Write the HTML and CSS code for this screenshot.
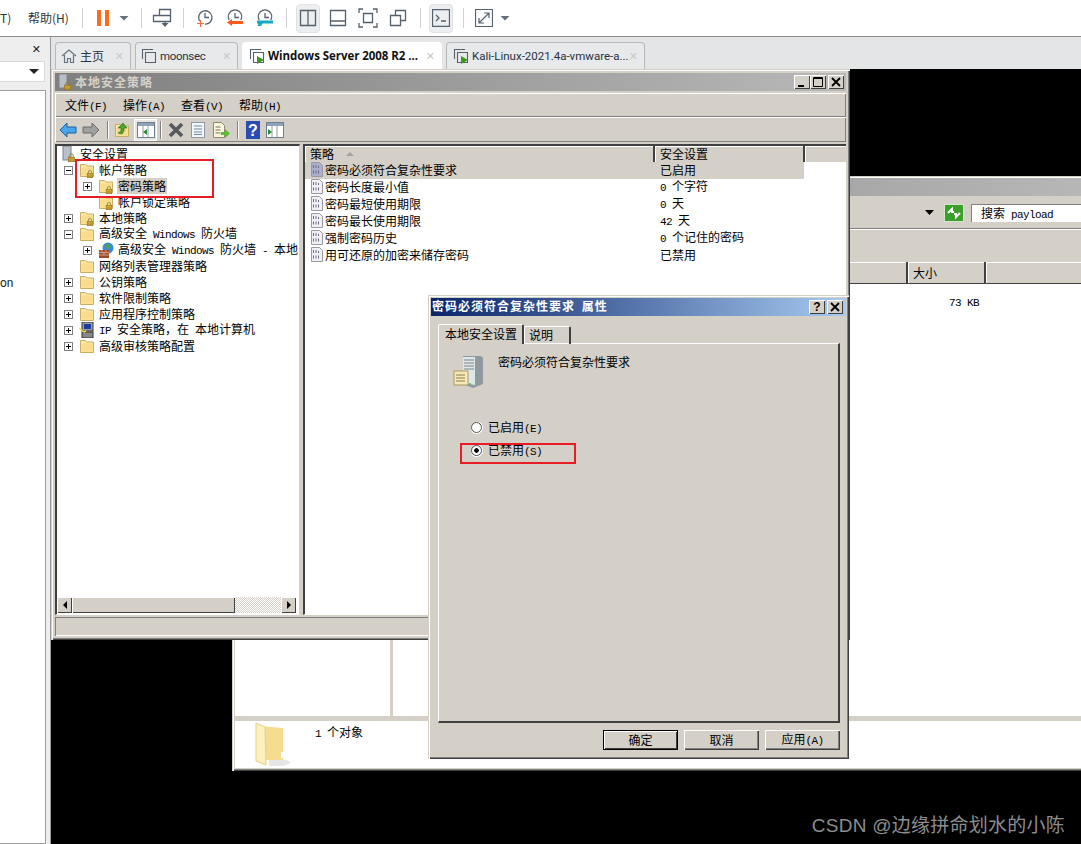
FILE: index.html
```html
<!DOCTYPE html>
<html lang="zh-CN">
<head>
<meta charset="utf-8">
<title>本地安全策略</title>
<link rel="stylesheet" href="styles.css">
</head>
<body>
<svg class="defs" width="0" height="0" aria-hidden="true">
  <defs>
    <symbol id="folder" viewBox="0 0 16 16">
      <path d="M1.5 14.5V2.5h5l1.500 1.500h6.500v10.500z" fill="#fbe7a3" stroke="#c9ad62"/>
      <path d="M2.500 13.500V5.500h11v8z" fill="#f8dc8c"/>
    </symbol>
    <symbol id="lock" viewBox="0 0 16 16">
      <path d="M5.500 9V6.500a2.500 2.500 0 0 1 5 0V9" fill="none" stroke="#8c7a3a" stroke-width="1.300"/>
      <rect x="3.500" y="9" width="9" height="6.500" fill="#e0b23a" stroke="#8c6d1a"/>
      <path d="M4.500 11.500h7M4.500 13.500h7" stroke="#a37f22"/>
    </symbol>
    <symbol id="policy" viewBox="0 0 14 15">
      <path d="M1.500.5h8l3 3v11h-11z" fill="currentColor" stroke="#9a9aa6"/>
      <path d="M3.500 3v3M6 3v3M3.500 8.500v3.500M6 8.500v3.500M8.500 8.500v3.500M8.500 4v2" stroke="#6d6d88" stroke-dasharray="3 1"/>
    </symbol>
    <symbol id="clock" viewBox="0 0 26 24">
      <path d="M7.600 15A6.700 6.700 0 1 1 13 18.200" fill="none" stroke="#55626e" stroke-width="1.300"/>
      <path d="M13 7v4.500h4" fill="none" stroke="#55626e" stroke-width="1.300"/>
    </symbol>
    <symbol id="clock-top" viewBox="0 0 26 24">
      <path d="M7.200 14A6.700 6.700 0 1 1 18.800 14" fill="none" stroke="#55626e" stroke-width="1.300"/>
      <path d="M13 7v4.500h4" fill="none" stroke="#55626e" stroke-width="1.300"/>
    </symbol>
  </defs>
</svg>

<header class="topbar">
  <span class="tb-text tb-cut">T)</span>
  <span class="tb-text tb-help">帮助(H)</span>
  <span class="sep"></span>
  <div class="tb-group tb-pause">
    <svg class="pause" viewBox="0 0 12 16" width="12" height="16"><path d="M0 0h4v16H0zM8 0h4v16H8z" fill="#ff6a1f"/></svg>
    <span class="tb-caret"></span>
  </div>
  <span class="sep"></span>
  <div class="tb-group tb-snap">
    <svg class="tb-icon" viewBox="0 0 28 24" width="28" height="24" fill="none" stroke="#55626e" stroke-width="1.300"><path d="M11.500 3.500h11v6h-11zM5.500 9.500h17v6h-17zM17 15.500v2"/><path d="M13.500 17h7L17 21z" fill="#55626e" stroke="none"/></svg>
  </div>
  <span class="sep"></span>
  <div class="tb-group tb-clocks">
    <svg class="tb-icon" viewBox="0 0 26 24" width="26" height="24"><use href="#clock"/><path d="M5 17.500h7M8.500 14v7" stroke="#f0703c" stroke-width="1.200"/></svg>
    <svg class="tb-icon" viewBox="0 0 26 24" width="26" height="24"><use href="#clock-top"/><path d="M10 15h11v3H10z" fill="#ff5a1f"/><path d="M10 13v7l-5-3.500z" fill="#ff5a1f"/></svg>
    <svg class="tb-icon" viewBox="0 0 26 24" width="26" height="24"><use href="#clock-top"/><path d="M5 14.500h16v3H11c-1.500 0-1 2-2 2.500H5l1.500-1.500L5 17z" fill="#18a8c8"/></svg>
  </div>
  <span class="sep"></span>
  <div class="tb-group tb-layouts">
    <span class="tb-btn is-on"><svg viewBox="0 0 18 18" width="18" height="18" fill="none" stroke="#55626e" stroke-width="1.300"><path d="M1.500 1.500h15v15h-15zM9 1.500v15"/></svg></span>
    <span class="tb-btn"><svg viewBox="0 0 18 18" width="18" height="18" fill="none" stroke="#55626e" stroke-width="1.300"><path d="M1.500 1.500h15v15h-15zM1.500 12h15"/></svg></span>
    <span class="tb-btn"><svg viewBox="0 0 20 20" width="20" height="20" fill="none" stroke="#55626e" stroke-width="1.300"><path d="M1 5V1h4M15 1h4v4M19 15v4h-4M5 19H1v-4M5.500 5.500h9v9h-9z"/></svg></span>
    <span class="tb-btn"><svg viewBox="0 0 18 18" width="18" height="18" fill="none" stroke="#55626e" stroke-width="1.300"><path d="M1.500 6.500h10v10h-10zM6.500 6V1.500h10v10H12"/></svg></span>
  </div>
  <span class="sep"></span>
  <div class="tb-group tb-term">
    <span class="tb-btn is-on"><svg viewBox="0 0 18 18" width="18" height="18" fill="none" stroke="#55626e" stroke-width="1.300"><path d="M.5.500h17v17H.5zM4 6l3 3-3 3M9 12h5"/></svg></span>
  </div>
  <span class="sep"></span>
  <div class="tb-group tb-full">
    <span class="tb-btn"><svg viewBox="0 0 18 18" width="18" height="18" fill="none" stroke="#55626e" stroke-width="1.200"><path d="M.5.500h17v17H.5zM4 14L14 4M9 4h5v5M4 9v5h5"/></svg></span>
    <span class="tb-caret"></span>
  </div>
</header>

<div class="main">
  <aside class="sidebar">
    <div class="side-head"><span class="side-close">✕</span></div>
    <div class="side-select"><span class="side-arrow"></span></div>
    <div class="side-list"><span class="side-item">on</span></div>
  </aside>

  <section class="workspace">
    <nav class="tabs">
      <div class="tab tab-home">
        <svg viewBox="0 0 16 16" width="16" height="16" fill="none" stroke="#66727e" stroke-width="1.200"><path d="M1 8l7-6 7 6M3.500 7v7.500h3v-4h3v4h3V7"/></svg>
        <span class="tab-label">主页</span><span class="tab-x">✕</span>
      </div>
      <div class="tab tab-moon">
        <svg viewBox="0 0 16 16" width="16" height="16" fill="none" stroke="#55626e" stroke-width="1.100"><path d="M1.500 11V1.500H12M4.500 4.500h10v10h-10z"/></svg>
        <span class="tab-label">moonsec</span><span class="tab-x">✕</span>
      </div>
      <div class="tab tab-active">
        <svg viewBox="0 0 16 16" width="16" height="16" fill="none" stroke="#55626e" stroke-width="1.100"><path d="M1.500 11V1.500H12M4.500 4.500h10v10h-10z"/><path d="M8 8l7 4-7 4z" fill="#3a9a1e" stroke="none"/></svg>
        <span class="tab-label">Windows Server 2008 R2 ...</span><span class="tab-x">✕</span>
      </div>
      <div class="tab tab-kali">
        <svg viewBox="0 0 16 16" width="16" height="16" fill="none" stroke="#55626e" stroke-width="1.100"><path d="M1.500 11V1.500H12M4.500 4.500h10v10h-10z"/><path d="M8 8l7 4-7 4z" fill="#3a9a1e" stroke="none"/></svg>
        <span class="tab-label">Kali-Linux-2021.4a-vmware-a...</span><span class="tab-x">✕</span>
      </div>
    </nav>

    <div class="vm">
      <div class="win win-back">
        <div class="title title-grey"></div>
        <div class="addr">
          <span class="addr-arrow"></span>
          <span class="go"><svg viewBox="0 0 20 18" width="20" height="18"><rect x=".5" y=".5" width="19" height="17" fill="#3aa02a" stroke="#cfe8c8"/><path d="M4 9l4-4v3h2M16 9l-4 4v-3h-2" fill="none" stroke="#fff" stroke-width="2"/></svg></span>
          <span class="search">搜索<span class="m"> payload</span></span>
        </div>
        <div class="back-tools"></div>
        <div class="cols">
          <span class="col col-a"></span><span class="col col-b"></span><span class="col col-c">大小</span><span class="col col-d"></span>
        </div>
        <div class="back-list">
          <div class="back-left"></div>
          <div class="back-right"><div class="file-row"><span class="m file-size">73 KB</span></div></div>
        </div>
        <div class="back-status">
          <svg class="big-folder" viewBox="0 0 36 44" width="36" height="44">
            <path d="M14 38h18l4 3-8 3H14z" fill="#e6e6e6"/>
            <path d="M4 4l24 2v32H10z" fill="#f5dc8e"/>
            <path d="M1 1l9 4 1 38-10-4z" fill="#fdf0bc" stroke="#e5cf86"/>
            <path d="M27 30v6" stroke="#fff" stroke-width="2"/>
          </svg>
          <span class="obj"><span class="m">1 </span>个对象</span>
        </div>
      </div>

      <div class="win win-main">
        <div class="title title-grey">
          <svg class="title-icon" viewBox="0 0 16 16" width="16" height="16"><rect x="2" y="0" width="8" height="14" fill="#b9bfc8" stroke="#7d838c"/><use href="#lock" x="5" y="5" width="11" height="11"/></svg>
          <span class="title-text title-text-dim">本地安全策略</span>
          <span class="caps">
            <span class="cap"><svg viewBox="0 0 12 10" width="12" height="10"><path d="M2 8h6v2H2z"/></svg></span>
            <span class="cap"><svg viewBox="0 0 12 10" width="12" height="10"><path d="M1.500.5h9v9h-9zM1 1.500h10" fill="none" stroke="#000"/></svg></span>
            <span class="cap cap-gap"><svg viewBox="0 0 12 10" width="12" height="10"><path d="M2 1l8 8M10 1l-8 8" stroke="#000" stroke-width="1.800"/></svg></span>
          </span>
        </div>
        <div class="menubar">
          <span class="menu-item">文件<span class="m">(F)</span></span>
          <span class="menu-item">操作<span class="m">(A)</span></span>
          <span class="menu-item">查看<span class="m">(V)</span></span>
          <span class="menu-item">帮助<span class="m">(H)</span></span>
        </div>
        <div class="toolbar">
          <svg class="t t-first" viewBox="0 0 18 16" width="18" height="16"><path d="M1 8l7-7v4h9v6H8v4z" fill="#49a6ec" stroke="#1f5f9e"/></svg>
          <svg class="t" viewBox="0 0 18 16" width="18" height="16"><path d="M17 8l-7-7v4H1v6h9v4z" fill="#a0a0a0" stroke="#6a6a6a"/></svg>
          <span class="t-sep t-sep1"></span>
          <svg class="t" viewBox="0 0 16 16" width="16" height="16"><use href="#folder"/><path d="M9 1L4 6h3v3l-3 2 4 1 2-3V6h3z" fill="#4ca52c" stroke="#2c6a18" stroke-width=".6"/></svg>
          <span class="t-on"><svg viewBox="0 0 18 16" width="18" height="16"><rect x=".5" y=".5" width="17" height="15" fill="#fff" stroke="#6f7f8f"/><path d="M1 1h16v3H1z" fill="#8fa3b8"/><path d="M6 4v11M11 4v11" stroke="#99a"/><path d="M10 7v6L6 10z" fill="#2c8a3a"/></svg></span>
          <span class="t-sep t-sep2"></span>
          <svg class="t" viewBox="0 0 16 16" width="16" height="16"><path d="M2 2l12 12M14 2L2 14" stroke="#55585c" stroke-width="3.600"/></svg>
          <svg class="t" viewBox="0 0 16 16" width="16" height="16"><rect x="1.500" y=".5" width="13" height="15" fill="#f4f6fa" stroke="#8e9aa8"/><path d="M4 4h8M4 7h8M4 10h8M4 12.500h8" stroke="#6b8aa8"/></svg>
          <svg class="t" viewBox="0 0 18 16" width="18" height="16"><path d="M1.500.5h8l3 3v12h-11z" fill="#fbf6dc" stroke="#8f8a6a"/><path d="M3.500 5h5M3.500 8h5M3.500 11h5" stroke="#76725a"/><path d="M9 10h4V7l5 4.500-5 4.500v-3H9z" fill="#5cbc3a"/></svg>
          <span class="t-sep t-sep3"></span>
          <svg class="t" viewBox="0 0 14 18" width="14" height="18"><rect width="14" height="18" fill="#2a4bb0"/><text class="help-q" x="7" y="14.500">?</text></svg>
          <svg class="t" viewBox="0 0 18 16" width="18" height="16"><rect x=".5" y=".5" width="17" height="15" fill="#fff" stroke="#6f7f8f"/><path d="M1 1h16v3H1z" fill="#8fa3b8"/><path d="M6 4v11M11 4v11" stroke="#99a"/><path d="M2 7v6l4-3z" fill="#2c8a3a"/></svg>
        </div>

        <div class="panes">
          <div class="tree-pane">
            <ul class="tree">
              <li class="row row-root"><svg class="ico-root" viewBox="0 0 16 16" width="16" height="16"><rect x="2" y="0" width="8" height="14" fill="#b9bfc8" stroke="#7d838c"/><use href="#lock" x="5" y="5" width="11" height="11"/></svg><span>安全设置</span></li>
              <li class="row"><span class="exp exp-open"></span><svg class="ico" width="16" height="16"><use href="#folder" width="16" height="16"/><use href="#lock" x="6" y="6" width="10" height="10"/></svg><span>帐户策略</span></li>
              <li class="row lv2"><span class="exp exp-closed"></span><svg class="ico" width="16" height="16"><use href="#folder" width="16" height="16"/><use href="#lock" x="6" y="6" width="10" height="10"/></svg><span class="sel">密码策略</span></li>
              <li class="row lv2"><span class="exp exp-none"></span><svg class="ico" width="16" height="16"><use href="#folder" width="16" height="16"/><use href="#lock" x="6" y="6" width="10" height="10"/></svg><span>帐户锁定策略</span></li>
              <li class="row"><span class="exp exp-closed"></span><svg class="ico" width="16" height="16"><use href="#folder" width="16" height="16"/><use href="#lock" x="6" y="6" width="10" height="10"/></svg><span>本地策略</span></li>
              <li class="row"><span class="exp exp-open"></span><svg class="ico" width="16" height="16"><use href="#folder" width="16" height="16"/></svg><span>高级安全<span class="m"> Windows </span>防火墙</span></li>
              <li class="row lv2"><span class="exp exp-closed"></span><svg class="ico" viewBox="0 0 16 16" width="16" height="16"><circle cx="10" cy="6" r="5.500" fill="#3a8ad8"/><path d="M7 3l4-1 1 4-3 1z" fill="#4caa3a"/><path d="M1 8h10v8H1z" fill="#a04a2a"/><path d="M1 10.500h10M1 13h10M4 8v2.500M8 8v2.500M6 10.500V13" stroke="#e0c0a8" stroke-width=".7"/></svg><span class="clip">高级安全<span class="m"> Windows </span>防火墙<span class="m"> - </span>本地</span></li>
              <li class="row"><span class="exp exp-none"></span><svg class="ico" width="16" height="16"><use href="#folder" width="16" height="16"/></svg><span>网络列表管理器策略</span></li>
              <li class="row"><span class="exp exp-closed"></span><svg class="ico" width="16" height="16"><use href="#folder" width="16" height="16"/></svg><span>公钥策略</span></li>
              <li class="row"><span class="exp exp-closed"></span><svg class="ico" width="16" height="16"><use href="#folder" width="16" height="16"/></svg><span>软件限制策略</span></li>
              <li class="row"><span class="exp exp-closed"></span><svg class="ico" width="16" height="16"><use href="#folder" width="16" height="16"/></svg><span>应用程序控制策略</span></li>
              <li class="row"><span class="exp exp-closed"></span><svg class="ico" viewBox="0 0 16 16" width="16" height="16"><rect x="3" y="0" width="11" height="9" fill="#9aa0a8" stroke="#333"/><rect x="5" y="2" width="7" height="5" fill="#1c3aa0"/><rect x="3" y="10" width="11" height="6" fill="#888" stroke="#333"/><path d="M0 6l5 4 2-1" fill="none" stroke="#f0e040" stroke-width="1.400"/></svg><span><span class="m">IP </span>安全策略，在<span class="m"> </span>本地计算机</span></li>
              <li class="row"><span class="exp exp-closed"></span><svg class="ico" width="16" height="16"><use href="#folder" width="16" height="16"/></svg><span>高级审核策略配置</span></li>
            </ul>
            <div class="hscroll">
              <span class="sb-btn"><span class="tri tri-l"></span></span>
              <span class="sb-thumb"></span>
              <span class="sb-track"></span>
              <span class="sb-btn"><span class="tri tri-r"></span></span>
            </div>
          </div>

          <div class="list-pane">
            <div class="list-head">
              <span class="lh lh-a">策略<span class="sort"></span></span>
              <span class="lh lh-b">安全设置</span>
              <span class="lh lh-c"></span>
            </div>
            <ul class="list">
              <li class="lrow lrow-sel"><svg class="pol pol-sel" width="14" height="15"><use href="#policy"/></svg><span class="lc-a">密码必须符合复杂性要求</span><span class="lc-b">已启用</span></li>
              <li class="lrow"><svg class="pol" width="14" height="15"><use href="#policy"/></svg><span class="lc-a">密码长度最小值</span><span class="lc-b"><span class="m">0 </span>个字符</span></li>
              <li class="lrow"><svg class="pol" width="14" height="15"><use href="#policy"/></svg><span class="lc-a">密码最短使用期限</span><span class="lc-b"><span class="m">0 </span>天</span></li>
              <li class="lrow"><svg class="pol" width="14" height="15"><use href="#policy"/></svg><span class="lc-a">密码最长使用期限</span><span class="lc-b"><span class="m">42 </span>天</span></li>
              <li class="lrow"><svg class="pol" width="14" height="15"><use href="#policy"/></svg><span class="lc-a">强制密码历史</span><span class="lc-b"><span class="m">0 </span>个记住的密码</span></li>
              <li class="lrow"><svg class="pol" width="14" height="15"><use href="#policy"/></svg><span class="lc-a">用可还原的加密来储存密码</span><span class="lc-b">已禁用</span></li>
            </ul>
          </div>
        </div>
        <div class="statusbar"></div>
      </div>

      <div class="win win-dialog">
        <div class="title title-blue">
          <span class="title-text">密码必须符合复杂性要求<span class="m"> </span>属性</span>
          <span class="caps">
            <span class="cap cap-help">?</span>
            <span class="cap"><svg viewBox="0 0 12 10" width="12" height="10"><path d="M2 1l8 8M10 1l-8 8" stroke="#000" stroke-width="1.800"/></svg></span>
          </span>
        </div>
        <div class="dtabs">
          <span class="dtab dtab-on">本地安全设置</span>
          <span class="dtab dtab-off">说明</span>
        </div>
        <div class="dpanel">
          <div class="dhead">
            <svg viewBox="0 0 30 32" width="30" height="32">
              <path d="M10 0h18l2 2v26l-10 4-10-4z" fill="#8f9aa0"/>
              <path d="M10 1h12v28l-12-2z" fill="#dfe5e8"/>
              <path d="M11 4h10M11 7h10M11 10h10M11 13h10" stroke="#7a868c"/>
              <rect x="1" y="15" width="14" height="14" fill="#f6e8b8" stroke="#a89860"/>
              <path d="M3 19h9M3 22h9M3 25h9" stroke="#8a7c50"/>
              <circle cx="17" cy="28" r="1" fill="#3ac83a"/>
            </svg>
            <span class="dhead-text">密码必须符合复杂性要求</span>
          </div>
          <div class="radio-row"><span class="radio"></span><span>已启用<span class="m">(E)</span></span></div>
          <div class="radio-row"><span class="radio radio-on"></span><span>已禁用<span class="m">(S)</span></span></div>
        </div>
        <div class="dfoot">
          <button class="btn btn-default">确定</button>
          <button class="btn">取消</button>
          <button class="btn">应用<span class="m">(A)</span></button>
        </div>
      </div>

      <span class="mark mark-tree"></span>
      <span class="mark mark-radio"></span>
      <span class="watermark">CSDN @边缘拼命划水的小陈</span>
    </div>
  </section>
</div>
</body>
</html>
```

FILE: styles.css
```css
* { box-sizing: border-box; }
html, body { margin: 0; padding: 0; }
body {
  width: 1081px;
  height: 844px;
  overflow: hidden;
  background: #fff;
  color: #000;
  font: 12px/16px "Noto Sans CJK SC", "Liberation Sans", sans-serif;
}
ul { list-style: none; margin: 0; padding: 0; }
.defs { position: absolute; }
.m { font: 11px/16px "Liberation Mono", monospace; letter-spacing: -.6px; white-space: pre; }

/* host toolbar */
.topbar {
  display: flex;
  align-items: center;
  height: 37px;
  background: #fff;
  border-bottom: 1px solid #8c8c8c;
  color: #333;
}
.tb-text { white-space: nowrap; font-family: "Noto Sans CJK SC", sans-serif; font-size: 12px; }
.tb-cut { width: 28px; overflow: hidden; }
.tb-help { width: 54px; }
.sep { width: 1px; height: 20px; background: #d0d0d0; flex: none; }
.tb-group { display: flex; align-items: center; flex: none; }
.tb-pause { padding: 0 7px 0 9px; }
.pause { margin: 0 5px; }
.tb-caret {
  width: 20px;
  height: 5px;
  background: #66707a;
  clip-path: polygon(5px 0, 15px 0, 10px 5px);
}
.tb-snap { padding: 0 7px 0 6px; }
.tb-clocks { padding: 0 8px; gap: 4px; }
.tb-layouts { padding: 0 10px 0 9px; gap: 6px; }
.tb-term { padding: 0 10px 0 8px; }
.tb-full { padding-left: 9px; }
.tb-btn {
  display: flex;
  align-items: center;
  justify-content: center;
  width: 24px;
  height: 29px;
  border-radius: 4px;
  border: 1px solid transparent;
}
.tb-full .tb-btn { width: 22px; }
.tb-btn.is-on { background: #eceef0; border-color: #dfe1e4; }

.main { display: flex; height: 807px; }

/* library sidebar */
.sidebar {
  width: 50px;
  flex: none;
  background: #eeeeee;
  display: flex;
  flex-direction: column;
}
.side-head { height: 24px; width: 45px; display: flex; align-items: center; justify-content: flex-end; padding-right: 4px; }
.side-close { font: bold 11px/1 "DejaVu Sans", sans-serif; color: #222; }
.side-select {
  width: 45px;
  height: 21px;
  background: #fff;
  border: 1px solid #d8d8d8;
  border-left: 0;
  display: flex;
  align-items: center;
  justify-content: flex-end;
  padding-right: 5px;
}
.side-arrow { width: 10px; height: 5px; background: #222; clip-path: polygon(0 0, 100% 0, 50% 100%); }
.side-list {
  width: 46px;
  flex: 1;
  margin-top: 8px;
  background: #fff;
  border: 1px solid #9e9e9e;
  border-left: 0;
  padding-top: 184px;
}
.side-item { display: block; font: 12px/16px Roboto, sans-serif; color: #222; }

.workspace { flex: 1; min-width: 0; border-left: 1px solid #9a9a9a; background: #e4e5e7; display: flex; flex-direction: column; }

/* VM tabs */
.tabs { display: flex; gap: 4px; height: 32px; padding: 5px 0 0 4px; flex: none; }
.tab {
  height: 27px;
  display: flex;
  align-items: center;
  padding: 0 6px 0 5px;
  background: #e8e9eb;
  border: 1px solid #b8b8b8;
  border-bottom: 0;
  border-radius: 4px 4px 0 0;
  color: #26323e;
  font: 11.500px/16px Roboto, "Noto Sans CJK SC", sans-serif;
  white-space: nowrap;
}
.tab-label { flex: 1; margin-left: 3px; overflow: hidden; }
.tab-x { color: #c9c9c9; font: bold 11px/1 "DejaVu Sans", sans-serif; }
.tab-home { width: 76px; }
.tab-home .tab-label { font: 12px/16px "Noto Sans CJK SC", sans-serif; }
.tab-moon { width: 103px; letter-spacing: -.3px; }
.tab-active { width: 200px; background: #fff; border-color: #fff; color: #111; font: 700 11.500px/16px "Open Sans", sans-serif; letter-spacing: -.05px; }
.tab-active svg { margin-left: 1px; }
.tab-kali { width: 199px; letter-spacing: 0; padding-left: 6px; }

/* desktop */
.vm { position: relative; flex: 1; background: #000; overflow: hidden; }
.win {
  position: absolute;
  background: #d4d0c8;
  display: flex;
  flex-direction: column;
  box-shadow: inset 1px 1px 0 #d4d0c8, inset 2px 2px 0 #fff, inset -1px -1px 0 #404040, inset -2px -2px 0 #808080;
}
.title { display: flex; align-items: center; flex: none; height: 18px; padding: 0 2px; }
.title-grey { background: linear-gradient(90deg, #7f7f7f, #b8b8b8); }
.title-blue { background: linear-gradient(90deg, #0a246a, #a6caf0); padding: 0 3px 0 1px; }
.title-text { font-weight: 700; color: #fff; white-space: nowrap; letter-spacing: 1px; }
.title-text .m { letter-spacing: 0; }
.title-text-dim { color: #d4d0c8; }
.caps { margin-left: auto; display: flex; }
.cap {
  width: 16px;
  height: 14px;
  display: flex;
  align-items: center;
  justify-content: center;
  background: #d4d0c8;
  box-shadow: inset 1px 1px 0 #fff, inset -1px -1px 0 #404040;
}
.cap-gap { margin-left: 2px; }
.cap-help { font: bold 12px/14px "Liberation Sans", sans-serif; margin-right: 2px; }

/* explorer behind */
.win-back { left: 181px; top: 107px; width: 869px; height: 595px; padding: 2px 0 3px 3px; }
.addr { display: flex; align-items: center; justify-content: flex-end; height: 33px; flex: none; border-bottom: 1px solid #808080; padding: 1px 20px 0 0; }
.addr-arrow { width: 9px; height: 5px; background: #000; clip-path: polygon(0 0, 100% 0, 50% 100%); margin-right: 10px; }
.go { display: flex; margin-right: 7px; }
.search { width: 110px; height: 18px; background: #fff; padding: 1px 0 0 10px; white-space: nowrap; box-shadow: inset 1px 1px 0 #808080; }
.back-tools { height: 33px; flex: none; border-top: 1px solid #fff; }
.cols { display: flex; height: 22px; flex: none; border-bottom: 1px solid #404040; }
.col { border-right: 2px solid #404040; box-shadow: inset 1px 1px 0 #fff; padding: 3px 0 0 5px; }
.col-a { width: 158px; }
.col-b { width: 515px; }
.col-c { width: 78px; }
.col-d { flex: 1; border-right: 0; }
.back-list { flex: 1; display: flex; min-height: 0; background: #fff; }
.back-left { width: 158px; border-right: 3px solid #d4d0c8; }
.back-right { flex: 1; padding-top: 11px; }
.file-row { padding-left: 515px; }
.file-size { display: block; width: 71px; text-align: right; }
.back-status { height: 47px; flex: none; margin-top: 5px; background: #fff; display: flex; align-items: flex-start; padding-left: 20px; }
.big-folder { margin-top: 1px; }
.obj { margin: 3px 0 0 24px; }

/* main window */
.win-main { left: 0; top: 0; width: 799px; height: 571px; padding: 4px; z-index: 1; }
.title-icon { margin-right: 2px; }
.menubar, .toolbar {
  display: flex;
  align-items: center;
  flex: none;
  box-shadow: inset 1px 1px 0 #fff, inset -1px -1px 0 #808080;
  background: #d4d0c8;
}
.menubar { height: 24px; margin-top: 2px; padding: 1px 0 0 10px; }
.menu-item { width: 58px; white-space: nowrap; }
.toolbar { height: 25px; padding-left: 4px; }
.t { flex: none; }
.toolbar svg + svg { margin-left: 6px; }
.t-first { margin-right: -1px; }
.t-sep { width: 2px; height: 18px; background: #808080; border-right: 1px solid #fff; flex: none; }
.t-sep1 { margin: 0 5px 0 7px; }
.toolbar .t-on { width: 23px; height: 22px; margin-left: 4px; display: flex; align-items: center; justify-content: center; background: #e8e6e1; box-shadow: inset 1px 1px 0 #fff, inset -1px -1px 0 #fff; flex: none; }
.t-sep2 { margin: 0 6px 0 3px; }
.t-sep3 { margin: 0 7px; }
.help-q { font: bold 16px "Liberation Sans", sans-serif; fill: #fff; text-anchor: middle; }

.panes { flex: 1; display: flex; gap: 3px; margin-top: 2px; min-height: 0; }
.tree-pane {
  width: 245px;
  flex: none;
  background: #fff;
  border-top: 2px solid #404040;
  border-left: 2px solid #404040;
  border-right: 1px solid #d4d0c8;
  border-bottom: 1px solid #fff;
  display: flex;
  flex-direction: column;
  overflow: hidden;
}
.tree { flex: 1; min-height: 0; overflow: hidden; }
.row { display: flex; align-items: center; height: 16px; padding-left: 7px; white-space: nowrap; }
.lv2 { padding-left: 26px; }
.row-root { padding-left: 4px; }
.ico-root { margin-right: 3px; flex: none; }
.exp {
  width: 9px;
  height: 9px;
  flex: none;
  border: 1px solid #808080;
  background-color: #fff;
  background-repeat: no-repeat;
  background-position: center;
}
.exp-open { background-image: linear-gradient(#000, #000); background-size: 5px 1px; }
.exp-closed { background-image: linear-gradient(#000, #000), linear-gradient(#000, #000); background-size: 5px 1px, 1px 5px; }
.exp-none { border: 0; background: none; }
.ico { flex: none; margin: 0 4px 0 6px; }
.sel { background: #d4d0c8; margin-left: -1px; padding: 0 1px; }
.clip { overflow: hidden; }

.hscroll { display: flex; height: 16px; flex: none; margin: 0 2px 1px 0; padding-right: 1px; }
.sb-btn {
  width: 15px;
  flex: none;
  display: flex;
  align-items: center;
  justify-content: center;
  background: #d4d0c8;
  box-shadow: inset 1px 1px 0 #fff, inset -1px -1px 0 #404040;
}
.sb-thumb { width: 163px; background: #d4d0c8; box-shadow: inset 1px 1px 0 #fff, inset -1px -1px 0 #404040; flex: none; }
.sb-track { flex: 1; background: repeating-conic-gradient(#d4d0c8 0 25%, #fff 0 50%) 0 0 / 2px 2px; }
.tri { width: 0; height: 0; border-top: 4px solid transparent; border-bottom: 4px solid transparent; }
.tri-l { border-right: 4px solid #000; }
.tri-r { border-left: 4px solid #000; }

.list-pane {
  flex: 1;
  min-width: 0;
  background: #fff;
  border-top: 2px solid #404040;
  border-left: 2px solid #404040;
  border-bottom: 1px solid #fff;
}
.list-head { display: flex; height: 16px; background: #d4d0c8; }
.lh { border-right: 2px solid #404040; box-shadow: inset 1px 1px 0 #fff; padding-left: 5px; line-height: 16px; white-space: nowrap; }
.lh-a { width: 350px; display: flex; align-items: center; }
.lh-b { width: 150px; }
.lh-c { flex: 1; border-right: 0; }
.sort { width: 8px; height: 4px; margin-left: 12px; background: #a6a39b; clip-path: polygon(50% 0, 100% 100%, 0 100%); }
.lrow { display: flex; align-items: center; height: 17px; width: 499px; white-space: nowrap; padding: 0 0 2px 5px; }
.lrow-sel { background: #d4d0c8; }
.pol { flex: none; margin-right: 1px; color: #f0f0f4; }
.pol-sel { color: #aab0cc; }
.lc-a { width: 335px; }
.statusbar { height: 19px; margin-top: 2px; flex: none; box-shadow: inset 1px 1px 0 #808080, inset -1px -1px 0 #fff; }

/* dialog */
.win-dialog { left: 377px; top: 226px; width: 421px; height: 464px; padding: 3px; z-index: 2; }
.dtabs { display: flex; align-items: flex-end; height: 27px; margin-left: 7px; padding-top: 2px; flex: none; position: relative; top: 1px; }
.dtab {
  height: 18px;
  border-top: 1px solid #fff;
  border-left: 1px solid #fff;
  border-right: 2px solid #404040;
  border-radius: 2px 2px 0 0;
  white-space: nowrap;
  line-height: 16px;
}
.dtab-on { height: 20px; width: 86px; background: #d4d0c8; z-index: 1; padding: 1px 0 0 6px; }
.dtab-off { width: 47px; padding: 0 0 0 4px; }
.dpanel {
  width: 402px;
  height: 380px;
  margin-left: 7px;
  flex: none;
  border-top: 1px solid #fff;
  border-left: 1px solid #fff;
  border-right: 2px solid #404040;
  border-bottom: 2px solid #404040;
  padding: 12px 0 0 14px;
}
.dhead { display: flex; align-items: flex-start; height: 60px; }
.dhead-text { margin: -2px 0 0 15px; }
.radio-row { display: flex; align-items: center; height: 23px; padding-left: 18px; white-space: nowrap; }
.radio {
  width: 11px;
  height: 11px;
  margin-right: 6px;
  border-radius: 50%;
  background: #fff;
  border: 1px solid #555;
  box-shadow: 0 1px 0 #fff, 1px 0 0 #fff;
  flex: none;
}
.radio-on { background: radial-gradient(circle, #000 0 2px, #fff 2.500px); }
.dfoot { display: flex; justify-content: flex-end; gap: 6px; padding: 7px 6px 0 0; }
.btn {
  width: 75px;
  height: 20px;
  padding: 0;
  background: #d4d0c8;
  border: 0;
  font: 12px/16px "Noto Sans CJK SC", sans-serif;
  color: #000;
  box-shadow: inset 1px 1px 0 #fff, inset -1px -1px 0 #404040, inset -2px -2px 0 #808080;
}
.btn-default { outline: 1px solid #000; outline-offset: -1px; box-shadow: inset 2px 2px 0 #fff, inset -2px -2px 0 #404040; }

/* annotations */
.mark { position: absolute; border: 2px solid #e81c24; z-index: 3; }
.mark-tree { left: 24px; top: 90px; width: 139px; height: 39px; }
.mark-radio { left: 409px; top: 374px; width: 116px; height: 21px; }
.watermark {
  position: absolute;
  right: 16px;
  bottom: 6px;
  z-index: 3;
  color: #8d8d8d;
  font: 19px/24px "Liberation Sans", "Noto Sans CJK SC", sans-serif;
  letter-spacing: .25px;
  white-space: nowrap;
}
```
